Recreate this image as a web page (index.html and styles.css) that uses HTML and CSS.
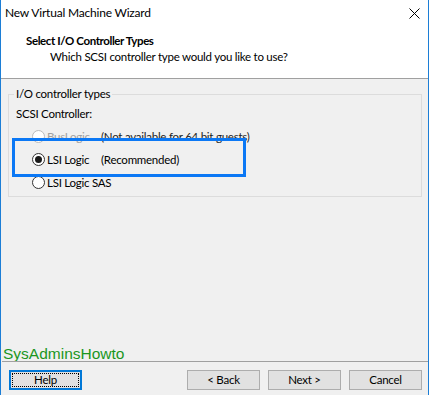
FILE: index.html
```html
<!DOCTYPE html>
<html>
<head>
<meta charset="utf-8">
<link rel="stylesheet" href="styles.css">
</head>
<body>
<div class="window">
  <div class="titlebar">
    <span class="title">New Virtual Machine Wizard</span>
    <svg class="close" width="11" height="11" viewBox="0 0 11 11"><path d="M0.5 0.5 L10.5 10.5 M10.5 0.5 L0.5 10.5" stroke="#000" stroke-width="1" fill="none"/></svg>
  </div>
  <div class="header">
    <div class="h-title">Select I/O Controller Types</div>
    <div class="h-sub">Which SCSI controller type would you like to use?</div>
  </div>
  <div class="main">
    <fieldset class="group">
      <legend>I/O controller types</legend>
      <div class="label">SCSI Controller:</div>
      <div class="options">
        <div class="opt disabled"><span class="radio"></span><span class="name">BusLogic</span><span class="note">(Not available for 64 bit guests)</span></div>
        <div class="opt"><span class="radio checked"></span><span class="name">LSI Logic</span><span class="note">(Recommended)</span></div>
        <div class="opt"><span class="radio"></span><span class="name">LSI Logic SAS</span></div>
        <div class="highlight"></div>
      </div>
    </fieldset>
    <div class="brand">SysAdminsHowto</div>
  </div>
  <div class="footer">
    <button class="btn focused"><span class="focus">Help</span></button>
    <div class="right-buttons">
      <button class="btn">&lt; Back</button>
      <button class="btn">Next &gt;</button>
      <button class="btn">Cancel</button>
    </div>
  </div>
</div>
</body>
</html>
```
FILE: styles.css
```css
* { box-sizing: border-box; }
html, body { margin: 0; padding: 0; }
body {
  width: 429px;
  height: 395px;
  overflow: hidden;
  font-family: Lato, "Noto Sans", sans-serif;
  font-size: 11.5px;
  letter-spacing: -0.25px;
  line-height: 16px;
  color: #000;
}
.window {
  width: 429px;
  height: 395px;
  border-left: 1px solid #1c7ed6;
  border-right: 1px solid #1c7ed6;
  background: #f0f0f0;
  display: flex;
  flex-direction: column;
}
.titlebar {
  height: 30px;
  background: #fff;
  display: flex;
  justify-content: space-between;
  align-items: flex-start;
  padding: 5px 8px 0 4px;
}
.title { font-size: 12px; letter-spacing: -0.2px; }
.close { margin-top: 3px; margin-right: 0; }
.header {
  height: 49px;
  background: #fff;
  border-bottom: 1px solid #a0a0a0;
  padding-top: 3px;
}
.h-title { font-weight: bold; padding-left: 25px; letter-spacing: -0.4px; }
.h-sub { padding-left: 49px; }
.main {
  flex: 1;
  display: flex;
  flex-direction: column;
  padding-top: 7px;
}
.group {
  margin: 0 6px 0 7px;
  padding: 0 0 2px 7px;
  border: 1px solid #dcdcdc;
  min-width: 0;
}
.group legend {
  padding: 0 2px;
  margin-left: -2px;
  line-height: 16px;
}
.label { margin-top: 4px; }
.options {
  position: relative;
  margin-top: 3px;
  padding-left: 16px;
}
.opt {
  height: 23px;
  display: flex;
  align-items: center;
}
.radio {
  width: 13px;
  height: 13px;
  border-radius: 50%;
  border: 1px solid #333;
  background: #fff;
  flex: none;
  margin-right: 2px;
  display: flex;
  align-items: center;
  justify-content: center;
}
.radio.checked::after {
  content: "";
  width: 7px;
  height: 7px;
  border-radius: 50%;
  background: #1a1a1a;
}
.name { width: 54px; flex: none; white-space: nowrap; }
.note { white-space: nowrap; }
.disabled .radio { border-color: #bcbcbc; background: #fff; }
.disabled .name { color: #a0a0a0; }
.disabled .note { color: #222; }
.highlight {
  position: absolute;
  left: -4px;
  top: 13px;
  width: 234px;
  height: 39px;
  border: 3px solid #0b78f5;
}
.brand {
  margin-top: auto;
  padding-left: 2px;
  font-family: "Liberation Sans", Arial, sans-serif;
  font-size: 15.5px;
  letter-spacing: 0;
  line-height: 13px;
  height: 14px;
  color: #1b961e;
}
.footer {
  height: 34px;
  border-top: 1px solid #a0a0a0;
  margin-left: 1px;
  display: flex;
  justify-content: space-between;
  align-items: flex-start;
  padding: 8px 6px 0 7px;
}
.right-buttons { display: flex; gap: 8px; }
.btn {
  width: 73px;
  height: 20px;
  border: 1px solid #adadad;
  background: #e1e1e1;
  font-family: inherit;
  font-size: 11.5px;
  letter-spacing: -0.25px;
  line-height: 16px;
  color: #000;
  padding: 0;
  margin: 0;
  display: flex;
  align-items: center;
  justify-content: center;
}
.btn.focused {
  border: 2px solid #0078d7;
  padding: 1px;
}
.focus {
  width: 100%;
  height: 100%;
  border: 1px dotted #000;
  display: flex;
  align-items: center;
  justify-content: center;
}
```
